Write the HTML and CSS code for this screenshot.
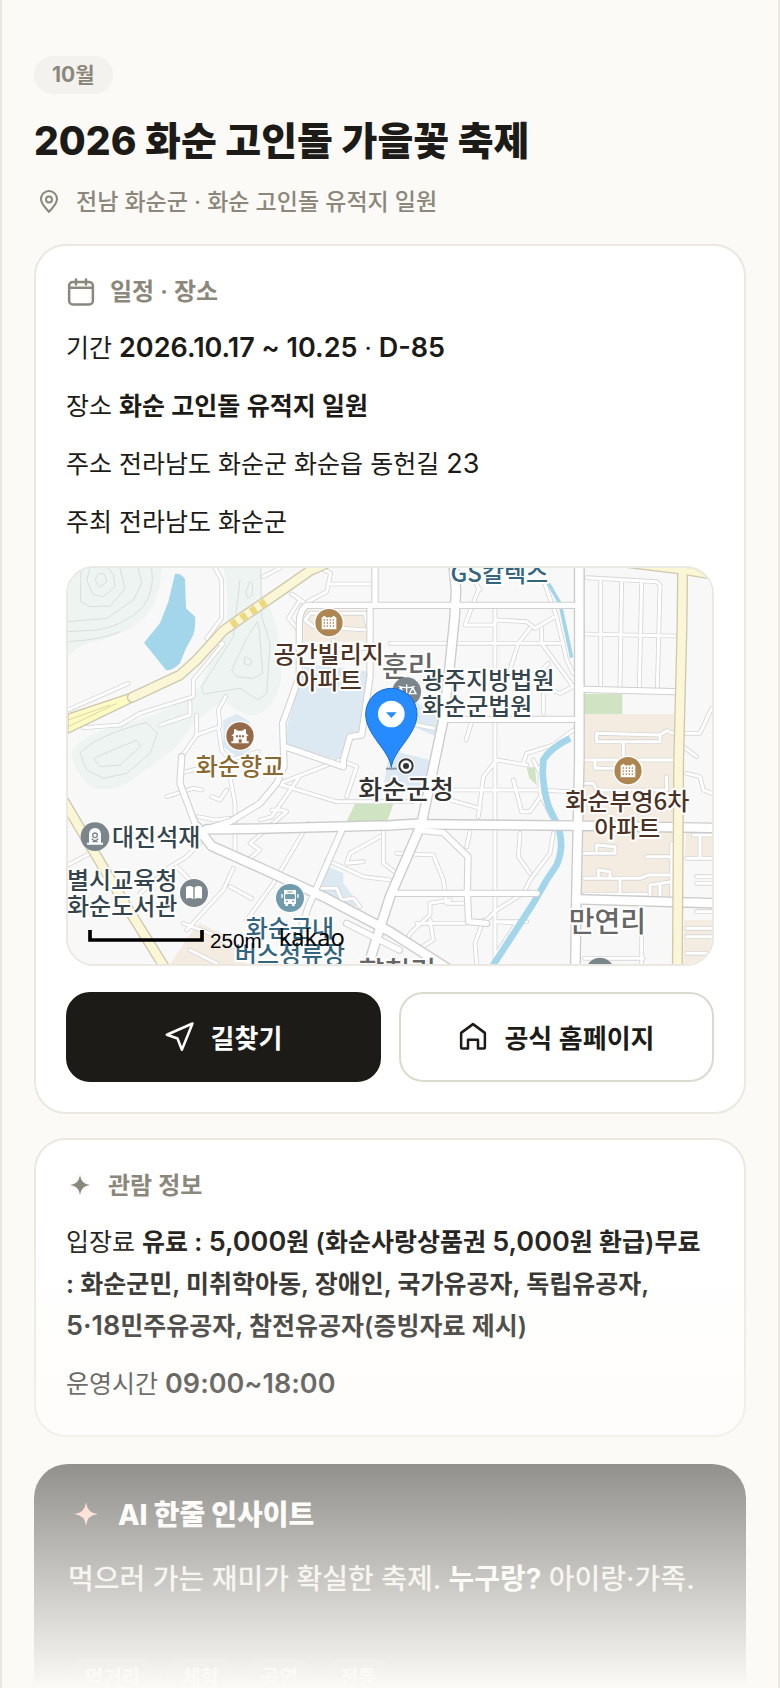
FILE: index.html
```
<!DOCTYPE html>
<html lang="ko">

<head>
    <meta charset="UTF-8">
    <meta name="viewport" content="width=device-width, initial-scale=1.0">
    <title>2026 화순 고인돌 가을꽃 축제</title>
    <link rel="stylesheet" href="styles.css">
</head>

<body>
    <main class="page">
        <header class="intro">
            <span class="month">10월</span>
            <h1>2026 화순 고인돌 가을꽃 축제</h1>
            <p class="location">
                <svg class="icon-pin" viewBox="0 0 24 24">
                    <path d="M12 22c-4-5-8-8-8-13a8 8 0 0 1 16 0c0 5-4 8-8 13z" />
                    <circle cx="12" cy="9.5" r="3" />
                </svg>
                전남 화순군 · 화순 고인돌 유적지 일원
            </p>
        </header>

        <section class="card">
            <h2>
                <svg class="icon-line" viewBox="0 0 24 24">
                    <rect x="2.500" y="4" width="19" height="18" rx="3" />
                    <path d="M3 8.500h18M8 2v4M16 2v4" />
                </svg>
                일정 · 장소
            </h2>
            <p>기간 <b class="num">2026.10.17 ~ 10.25</b> · <b class="num">D-85</b></p>
            <p>장소 <b>화순 고인돌 유적지 일원</b></p>
            <p>주소 전라남도 화순군 화순읍 동헌길 <span class="num">23</span></p>
            <p>주최 전라남도 화순군</p>

            <div class="map">
                <svg viewBox="24 24 1932 1188" preserveAspectRatio="xMidYMid slice">
                    <defs>
                        <g id="major">
                            <path d="M1180 10L1188 90L1184 170L1168 330L1150 480L1085 790L990 1010L920 1230" />
                            <path d="M1558 10V600L1549 1010L1546 1230" />
                            <path d="M440 808L600 806L990 796L1090 790" />
                            <path d="M1090 793L1540 797L1970 804" />
                            <path d="M1560 1018L1970 1030" />
                            <path d="M410 800L455 858L620 932L800 1015L990 1115L1170 1230" />
                        </g>
                        <g id="middle">
                            <path d="M925 136H1545" />
                            <path d="M945 10V136" />
                            <path d="M740 136H925M740 136Q718 150 718 190V350L668 490L672 620L650 670L600 730L510 785L430 810" />
                            <path d="M675 560L850 620L850 600L870 530L905 525L930 350" />
                            <path d="M1150 478H1540M1573 388L1842 395M1010 1000H1430" />
                            <path d="M850 800L745 1040L690 1210" />
                            <path d="M1090 812L1150 818L1205 872L1224 890L1222 1000L1226 1085L1280 1090" />
                            <path d="M365 590L360 670L405 790" />
                            <path d="M930 150V340M1018 1170L860 1090" />
                        </g>
                        <g id="minor">
                            <path d="M990 250H1510M1305 150V1215M810 72H940M990 478L1120 505" />
                            <path d="M465 24L485 60V175L440 235L460 250L490 250L400 360L400 410L320 435L240 460L180 495L70 503" />
                            <path d="M24 450L205 370M390 425V465L300 495M410 465V525L365 590M410 525L480 500L475 450L497 410" />
                            <path d="M610 50L660 24M695 102L735 130L800 95L812 40L780 24M720 120L685 175L720 215" />
                            <path d="M735 180L750 160L915 160L925 210L760 200Z M820 240V270L920 265" />
                            <path d="M475 500L485 570L510 600L595 575" />
                            <path d="M510 650L525 730V870M655 672L830 725H1060M655 672L840 600L890 620L860 710" />
                            <path d="M360 640L435 620V600M320 710L400 685L425 690M415 770L465 780L510 775M455 710L480 720L500 690" />
                            <path d="M715 655L635 770L600 780M635 750H665L680 755L570 850L600 870L570 895" />
                            <path d="M420 850L380 890L330 920L240 1000M24 915L110 870M350 920L400 970" />
                            <path d="M520 925L490 990L380 1110M510 980L575 1015M745 790L640 970L560 1080" />
                            <path d="M370 1090L450 1120L520 1160M390 1170L470 1210" />
                            <path d="M770 985L830 985L845 1020L880 1015L900 1040M800 900L910 950L990 960" />
                            <path d="M960 830L870 880L860 910L910 905M970 800V910L1010 940" />
                            <path d="M1255 90L1215 195H1300L1310 180L1400 185L1425 205L1485 170M1260 90L1235 50V24" />
                            <path d="M1450 60L1490 170L1520 300L1540 340M1350 330L1375 250L1410 205M1445 205V250L1540 380L1500 400L1450 380L1450 460" />
                            <path d="M1235 485L1218 540M1465 310L1440 335M1390 610L1400 580L1480 555L1540 510" />
                            <path d="M1130 690H1440L1530 695M1170 720L1260 745M1310 600L1270 650L1255 770M1310 600L1400 615" />
                            <path d="M1360 660L1385 755H1410L1445 705M1440 620V700L1475 770M1440 640L1420 600" />
                            <path d="M1380 820L1375 890L1410 940M1480 820L1470 880L1410 960L1390 1000L1310 1050L1280 1080" />
                            <path d="M1010 880L1120 885L1130 910L1150 960L1160 1030H1210M1230 815L1220 860" />
                            <path d="M1040 1145L1050 1120L1110 1065V1030L1170 1020M1070 1090L1215 1090M1110 1080L1120 1140L1070 1170" />
                            <path d="M1270 1080L1245 1150L1250 1215M1310 1085L1370 1090L1310 1180M1310 1085H1400" />
                            <path d="M1580 53L1790 65L1800 75L1792 385M1622 55V380M1685 60L1680 380M1745 65L1738 380M1573 222L1845 228" />
                            <path d="M1610 520L1800 525L1820 512L1840 520M1610 520V545H1800V525M1690 550V600M1573 600H1840" />
                            <path d="M1605 600V625H1700M1573 670H1600L1610 690H1820V650M1610 870V855L1665 860M1573 880L1665 880V860M1760 890H1835" />
                            <path d="M1573 955L1740 955L1765 945H1835M1835 850V990M1615 955V930L1650 935V950M1680 955V1000M1573 1003H1760" />
                            <path d="M1770 1005V975L1835 965V1010M1800 970V1010M1745 1040V1212M1573 1195H1750" />
                            <path d="M1870 520H1920L1955 445M1870 560L1910 590M1880 640L1920 650L1930 690L1955 700" />
                            <path d="M1880 895H1960M1920 830V890M1900 825H1960M1910 950H1960M1910 970H1960M1910 1055H1960M1880 1105H1960M1880 1130H1960M1880 1180H1960" />
                        </g>
                        <g id="apartment">
                            <circle r="45" fill="#fff" />
                            <circle r="41" fill="#ad8652" />
                            <path d="M-22 20V-15L-14 -21L-6 -15L0 -17L6 -15L14 -21L22 -15V20Z" fill="#fff" />
                            <path d="M-16 -8H18M-16 1H18M-16 10H18" stroke="#ad8652" stroke-width="4" stroke-dasharray="4 5" />
                        </g>
                    </defs>

                    <rect x="24" y="24" width="1932" height="1188" fill="#f8f8f8" />

                    <!-- hills -->
                    <g fill="#eef4f1">
                        <path d="M24 24H305Q300 150 220 200Q140 240 100 245T24 290Z" />
                        <path d="M490 24H605V95Q665 190 665 350Q650 440 590 465Q540 470 490 420L400 490L350 560Q250 640 180 680Q110 700 80 670Q35 620 35 580Q60 520 200 490Q350 450 420 380L500 190Q510 100 490 24Z" />
                    </g>
                    <g fill="none" stroke="#d9ded8" stroke-width="3">
                        <path d="M105 60Q115 30 135 45L140 65L120 82Z" />
                        <path d="M90 24L80 60L100 105L130 110L165 80L160 45L145 24" />
                        <path d="M62 24V125L90 140L150 138L195 85L180 24" />
                        <path d="M24 185L140 175L220 120L245 70L235 24" />
                        <path d="M24 215L110 210Q190 200 250 140Q285 90 275 24" />
                        <path d="M24 245Q120 240 180 215" />
                        <path d="M570 65L558 95L562 115L577 105V70Z" />
                        <path d="M592 185L560 235L515 330L530 350L580 355L608 340L598 210Z" />
                        <path d="M602 24L605 170L630 250L620 400L595 420L540 385L430 402L425 380L520 230L540 60" />
                        <path d="M555 290L552 310L570 318L575 300Z" />
                        <path d="M60 580Q100 530 260 487L292 520L270 580L200 640L130 655L80 630Z" />
                        <path d="M100 595L230 540L242 560L180 615L120 620Z" />
                    </g>

                    <path d="M345 42Q362 38 375 58L378 145L405 170Q408 195 400 225L378 265L360 310Q335 335 318 330L252 248L300 190L325 125Z" fill="#a3d6ea" />
                    <g fill="#dce9f2">
                        <path d="M735 310L925 335L910 525L868 540L845 600L680 570V500Z" />
                        <path d="M490 480L530 462L570 485V570L530 590L490 560Z" />
                        <path d="M800 918L850 940V970L895 1030L885 1040L755 1005Z" />
                        <path d="M1060 420L1150 480L1130 530L1060 500Z" />
                        <path d="M990 570L1110 600L1100 690L970 680Z" />
                        <path d="M760 600H840L830 622Z" />
                    </g>
                    <g fill="#f4ece0">
                        <path d="M730 150H935V245H730Z" />
                        <path d="M1573 462H1842L1836 1010H1563Z" />
                        <path d="M1878 820H1956V895H1874ZM1872 1080H1956V1212H1870Z" />
                        <path d="M400 1110L420 1090L545 1150L560 1212H330Z" />
                    </g>
                    <g fill="#d0e3c2">
                        <path d="M1573 402H1687V462H1573Z" />
                        <path d="M885 732H1000L980 788H858Z" />
                        <path d="M1400 622H1425L1430 675L1408 655Z" />
                    </g>

                    <use href="#minor" class="road casing-minor" />
                    <use href="#minor" class="road fill-minor" />

                    <g fill="none" stroke="#a3d6ea">
                        <path d="M1465 70L1500 130L1535 293" stroke-width="11" />
                        <path d="M1530 535Q1470 565 1450 600L1448 640Q1452 700 1466 740L1495 800Q1514 860 1490 915L1460 960L1420 1030L1290 1230" stroke-width="20" />
                    </g>

                    <use href="#middle" class="road casing-middle" />
                    <use href="#major" class="road casing-major" />
                    <use href="#middle" class="road fill-middle" />
                    <use href="#major" class="road fill-major" />

                    <!-- highways -->
                    <path d="M24 462L210 400L222 424L24 520Z" fill="#fffbc4" stroke="#cfc8b0" stroke-width="4" />
                    <path d="M24 480L150 435M24 500L170 430" stroke="#ddd5a0" stroke-width="3" />
                    <g class="road casing-highway">
                        <path d="M217 412L360 345L410 300L490 212L560 163L660 95L750 32L800 10" />
                        <path d="M10 720L60 805L200 1040L325 1240" />
                        <path d="M1868 10L1866 200L1856 600L1852 1240" />
                        <path d="M1680 5L1868 28L1970 45" />
                    </g>
                    <g class="road fill-highway">
                        <path d="M217 412L360 345L410 300L490 212L560 163L660 95L750 32L800 10" />
                        <path d="M10 720L60 805L200 1040L325 1240" />
                        <path d="M1868 10L1866 200L1856 600L1852 1240" />
                        <path d="M1680 5L1868 28L1970 45" />
                    </g>
                    <path d="M515 195L625 120" stroke="#ecd979" stroke-width="23" stroke-dasharray="18 17" />

                    <!-- places -->
                    <use href="#apartment" x="807" y="188" />
                    <use href="#apartment" x="1704" y="632" />
                    <g transform="translate(540 528)">
                        <circle r="45" fill="#fff" />
                        <circle r="41" fill="#956a49" />
                        <path d="M-26 22V16H-20V0H-26L-18 -8V-20H-12L-8 -16H8L12 -20H18V-8L26 0H20V16H26V22Z" fill="#fff" />
                        <path d="M-4 20V10H5V20ZM-12 -2H-6V4H-12ZM-3 -2H3V4H-3ZM6 -2H12V4H6Z" fill="#956a49" />
                    </g>
                    <g transform="translate(105 830)">
                        <circle r="43" fill="#7b868c" />
                        <path d="M-24 24V18H-18V-8Q-16 -26 0 -26T18 -8V18H24V24Z" fill="#fff" />
                        <circle cy="-4" r="7" fill="none" stroke="#7b868c" stroke-width="4" />
                        <path d="M-10 6Q0 18 10 6M-8 15H8" fill="none" stroke="#7b868c" stroke-width="4" />
                    </g>
                    <g transform="translate(402 999)">
                        <circle r="45" fill="#fff" />
                        <circle r="42" fill="#7b868c" />
                        <path d="M-24 -18Q-12 -25 -2 -17V18Q-12 12 -24 17ZM24 -18Q12 -25 2 -17V18Q12 12 24 17Z" fill="#fff" />
                    </g>
                    <g transform="translate(690 1014)">
                        <circle r="45" fill="#fff" />
                        <circle r="42" fill="#6f9bac" />
                        <path d="M-18 -24H18V18H14V24H6V18H-6V24H-14V18H-18Z" fill="#fff" />
                        <path d="M-13 -10H13V2H-13ZM-8 -18H8" fill="#6f9bac" stroke="#6f9bac" stroke-width="3" />
                        <path d="M-24 -12V0M24 -12V0" stroke="#fff" stroke-width="4" />
                        <path d="M-12 10H-6M6 10H12" stroke="#6f9bac" stroke-width="4" />
                    </g>
                    <circle cx="1620" cy="1235" r="42" fill="#7b868c" />

                    <g class="labels">
                        <g class="area">
                            <text x="966" y="352">훈리</text>
                            <text x="1526" y="1116">만연리</text>
                            <text x="896" y="1266">향청리</text>
                        </g>
                        <g class="transit" text-anchor="middle">
                            <text x="1318" y="66">GS칼텍스</text>
                            <text x="690" y="1132">화순군내</text>
                            <text x="690" y="1210">버스정류장</text>
                        </g>
                        <g class="housing" text-anchor="middle">
                            <text x="806" y="308">공간빌리지</text>
                            <text x="806" y="386">아파트</text>
                            <text x="1702" y="750">화순부영6차</text>
                            <text x="1702" y="830">아파트</text>
                        </g>
                        <text class="school" x="540" y="645" text-anchor="middle">화순향교</text>
                        <g transform="translate(1040 395)">
                            <circle r="43" fill="#7b868c" />
                            <path d="M0 -22V20M-24 -16Q0 -8 24 -16M-18 -12L-28 6H-8ZM18 -12L8 6H28Z" fill="none" stroke="#fff" stroke-width="4" />
                        </g>
                        <g class="public">
                            <text x="1086" y="386">광주지방법원</text>
                            <text x="1086" y="465">화순군법원</text>
                            <text x="156" y="859">대진석재</text>
                            <text x="21" y="987">별시교육청</text>
                            <text x="21" y="1065">화순도서관</text>
                        </g>
                        <text class="hall" x="895" y="716">화순군청</text>
                    </g>

                    <circle cx="1038" cy="618" r="26" fill="#fff" />
                    <circle cx="1038" cy="618" r="20" fill="#fff" stroke="#333" stroke-width="6" />
                    <circle cx="1038" cy="618" r="9" fill="#333" />
                    <path d="M978 626H1010" stroke="#8797ab" stroke-width="6" />
                    <path d="M994 622C988 570 917 525 917 462A77 77 0 0 1 1071 462C1071 525 1000 570 994 622Z" fill="#258bff" stroke="#1769cf" stroke-width="3" />
                    <circle cx="994" cy="462" r="40" fill="#fff" />
                    <path d="M978 457H1010L994 474Z" fill="#258bff" />

                    <path d="M90 1110V1140H426V1110" fill="none" stroke="#000" stroke-width="11" />
                    <text class="scale" x="450" y="1163">250m</text>
                    <text class="brand" x="656" y="1157">kakao</text>
                </svg>
            </div>

            <div class="actions">
                <button type="button" class="primary">
                    <svg class="icon-line" viewBox="0 0 24 24">
                        <path d="M22 2L1.500 11l8.500 3 3.500 9z" />
                    </svg>
                    길찾기
                </button>
                <button type="button">
                    <svg class="icon-line" viewBox="0 0 24 24">
                        <path d="M2.500 9.500L12 2.500l9.500 7V21a1 1 0 0 1-1 1H16v-7H8v7H3.500a1 1 0 0 1-1-1z" />
                    </svg>
                    공식 홈페이지
                </button>
            </div>
        </section>

        <section class="card">
            <h2>
                <svg class="icon-star" viewBox="0 0 28 28">
                    <path d="M14 3Q15 12 24 13Q15 14 14 23Q13 14 4 13Q13 12 14 3z" />
                </svg>
                관람 정보
            </h2>
            <p>입장료 <b>유료 : <span class="num">5,000</span>원 (화순사랑상품권 <span class="num">5,000</span>원 환급)무료 :&nbsp;화순군민, 미취학아동, 장애인, 국가유공자, 독립유공자, <span class="num">5·18</span>민주유공자, 참전유공자(증빙자료 제시)</b></p>
            <p>운영시간 <b class="num">09:00~18:00</b></p>
        </section>

        <section class="insight">
            <h2>
                <svg class="icon-star" viewBox="0 0 28 28">
                    <path d="M14 1Q15 12 26 13Q15 14 14 25Q13 14 2 13Q13 12 14 1z" />
                </svg>
                AI 한줄 인사이트
            </h2>
            <p>먹으러 가는 재미가 확실한 축제. <b>누구랑?</b> 아이랑·가족.</p>
            <ul class="tags">
                <li>먹거리</li>
                <li>체험</li>
                <li>공연</li>
                <li>전통</li>
            </ul>
        </section>

        <div class="fade"></div>
    </main>
</body>

</html>
```
FILE: styles.css
```
* {
    box-sizing: border-box;
}

body {
    margin: 0;
    background-color: #fbfaf6;
    color: #1c1b17;
    font-family: Inter, "Noto Sans CJK KR", sans-serif;
    font-size: 25px;
    line-height: 42px;
    word-break: keep-all;
}

h1,
h2,
p,
ul {
    margin: 0;
    padding: 0;
}

b {
    font-weight: 600;
}

.num {
    font-size: 27px;
    line-height: 1;
}

.page {
    position: relative;
    height: 100vh;
    overflow: hidden;
    padding: 56px 32px 0;
    border-left: 2px solid #e9e7df;
    border-right: 2px solid #e9e7df;
}

/* title block */
.intro {
    display: flex;
    flex-direction: column;
    align-items: flex-start;
    margin-bottom: 23px;
}

.month {
    padding: 0 18px;
    border-radius: 19px;
    background-color: #f3f2ee;
    color: #8c877b;
    font-size: 21px;
    font-weight: 700;
    line-height: 38px;
}

h1 {
    margin-top: 22px;
    font-size: 39px;
    font-weight: 800;
    line-height: 50px;
}

.location {
    display: flex;
    align-items: center;
    gap: 15px;
    margin-top: 17px;
    padding-left: 3px;
    color: #8c877b;
    font-size: 23px;
    font-weight: 500;
    line-height: 38px;
}

svg {
    display: block;
    flex-shrink: 0;
}

.icon-pin,
.icon-line {
    fill: none;
    stroke: currentColor;
    stroke-width: 2;
    stroke-linejoin: round;
    stroke-linecap: round;
}

.icon-pin {
    width: 24px;
    height: 24px;
}

.icon-line {
    width: 30px;
    height: 30px;
}

.icon-star {
    width: 28px;
    height: 28px;
    fill: currentColor;
}

/* cards */
.card {
    margin-bottom: 24px;
    padding: 30px;
    border: 2px solid #eae8e0;
    border-radius: 32px;
    background-color: #fff;
}

h2 {
    display: flex;
    align-items: center;
    gap: 14px;
    margin-bottom: 19px;
    color: #8c877b;
    font-size: 24px;
    font-weight: 600;
    line-height: 32px;
}

.card p + p {
    margin-top: 16px;
}

.map {
    aspect-ratio: 648 / 400;
    margin-top: 23px;
    border: 2px solid #eae8e0;
    border-radius: 28px;
    overflow: hidden;
}

.map svg {
    width: 100%;
    height: 100%;
}

.actions {
    display: grid;
    grid-template-columns: 1fr 1fr;
    gap: 18px;
    margin-top: 26px;
}

button {
    display: flex;
    align-items: center;
    justify-content: center;
    gap: 16px;
    height: 90px;
    padding: 0 0 2px;
    border: 2px solid #dcd9ce;
    border-radius: 24px;
    background-color: #fff;
    color: #1c1b17;
    font-family: inherit;
    font-size: 26px;
    font-weight: 600;
    cursor: pointer;
}

button.primary {
    border-color: #1c1b17;
    background-color: #1c1b17;
    color: #fff;
}

/* map drawing */
.road {
    fill: none;
    stroke-linecap: round;
    stroke-linejoin: round;
}

.casing-minor {
    stroke: #d6d6d6;
    stroke-width: 14px;
}

.fill-minor {
    stroke: #fff;
    stroke-width: 9px;
}

.casing-middle {
    stroke: #d0d0d0;
    stroke-width: 22px;
}

.fill-middle {
    stroke: #fff;
    stroke-width: 16px;
}

.casing-major {
    stroke: #cbcbcb;
    stroke-width: 33px;
}

.fill-major {
    stroke: #fff;
    stroke-width: 25px;
}

.casing-highway {
    stroke: #cfc8b0;
    stroke-width: 33px;
}

.fill-highway {
    stroke: #fbf6d5;
    stroke-width: 25px;
}

.labels text {
    stroke: #fff;
    stroke-width: 12px;
    stroke-linejoin: round;
    paint-order: stroke;
    font-family: "Noto Sans CJK KR", sans-serif;
    font-size: 72px;
    font-weight: 500;
}

.labels .area text {
    fill: #666;
    font-size: 84px;
}

.transit text {
    fill: #33657f;
}

.housing text {
    fill: #4c3224;
}

.public text {
    fill: #34454d;
}

.labels .school {
    fill: #8a682f;
}

.labels .hall {
    fill: #333;
    font-size: 78px;
}

.scale {
    font-family: "Liberation Sans", sans-serif;
    font-size: 62px;
}

.brand {
    font-family: "Noto Sans", sans-serif;
    font-size: 71px;
}

/* insight */
.insight {
    margin-top: 27px;
    padding: 32px 34px;
    border-radius: 34px;
    background-color: #1c1b17;
    color: #e9e7df;
    font-size: 28px;
    font-weight: 500;
}

.insight h2 {
    gap: 18px;
    margin-bottom: 24px;
    padding-left: 4px;
    color: #fff;
    font-size: 28px;
    font-weight: 800;
    line-height: 38px;
}

.insight .icon-star {
    color: #ffb8a6;
}

.insight b {
    color: #fff;
    font-weight: 700;
}

.tags {
    display: flex;
    gap: 8px;
    margin-top: 58px;
    list-style: none;
}

.tags li {
    padding: 0 17px;
    border-radius: 20px;
    background-color: #33322e;
    color: #fff;
    font-size: 20px;
    font-weight: 600;
    line-height: 40px;
}

.fade {
    position: absolute;
    right: 0;
    bottom: 0;
    left: 0;
    height: 472px;
    background: linear-gradient(rgba(251, 250, 246, 0), #fbfaf6);
}
```
